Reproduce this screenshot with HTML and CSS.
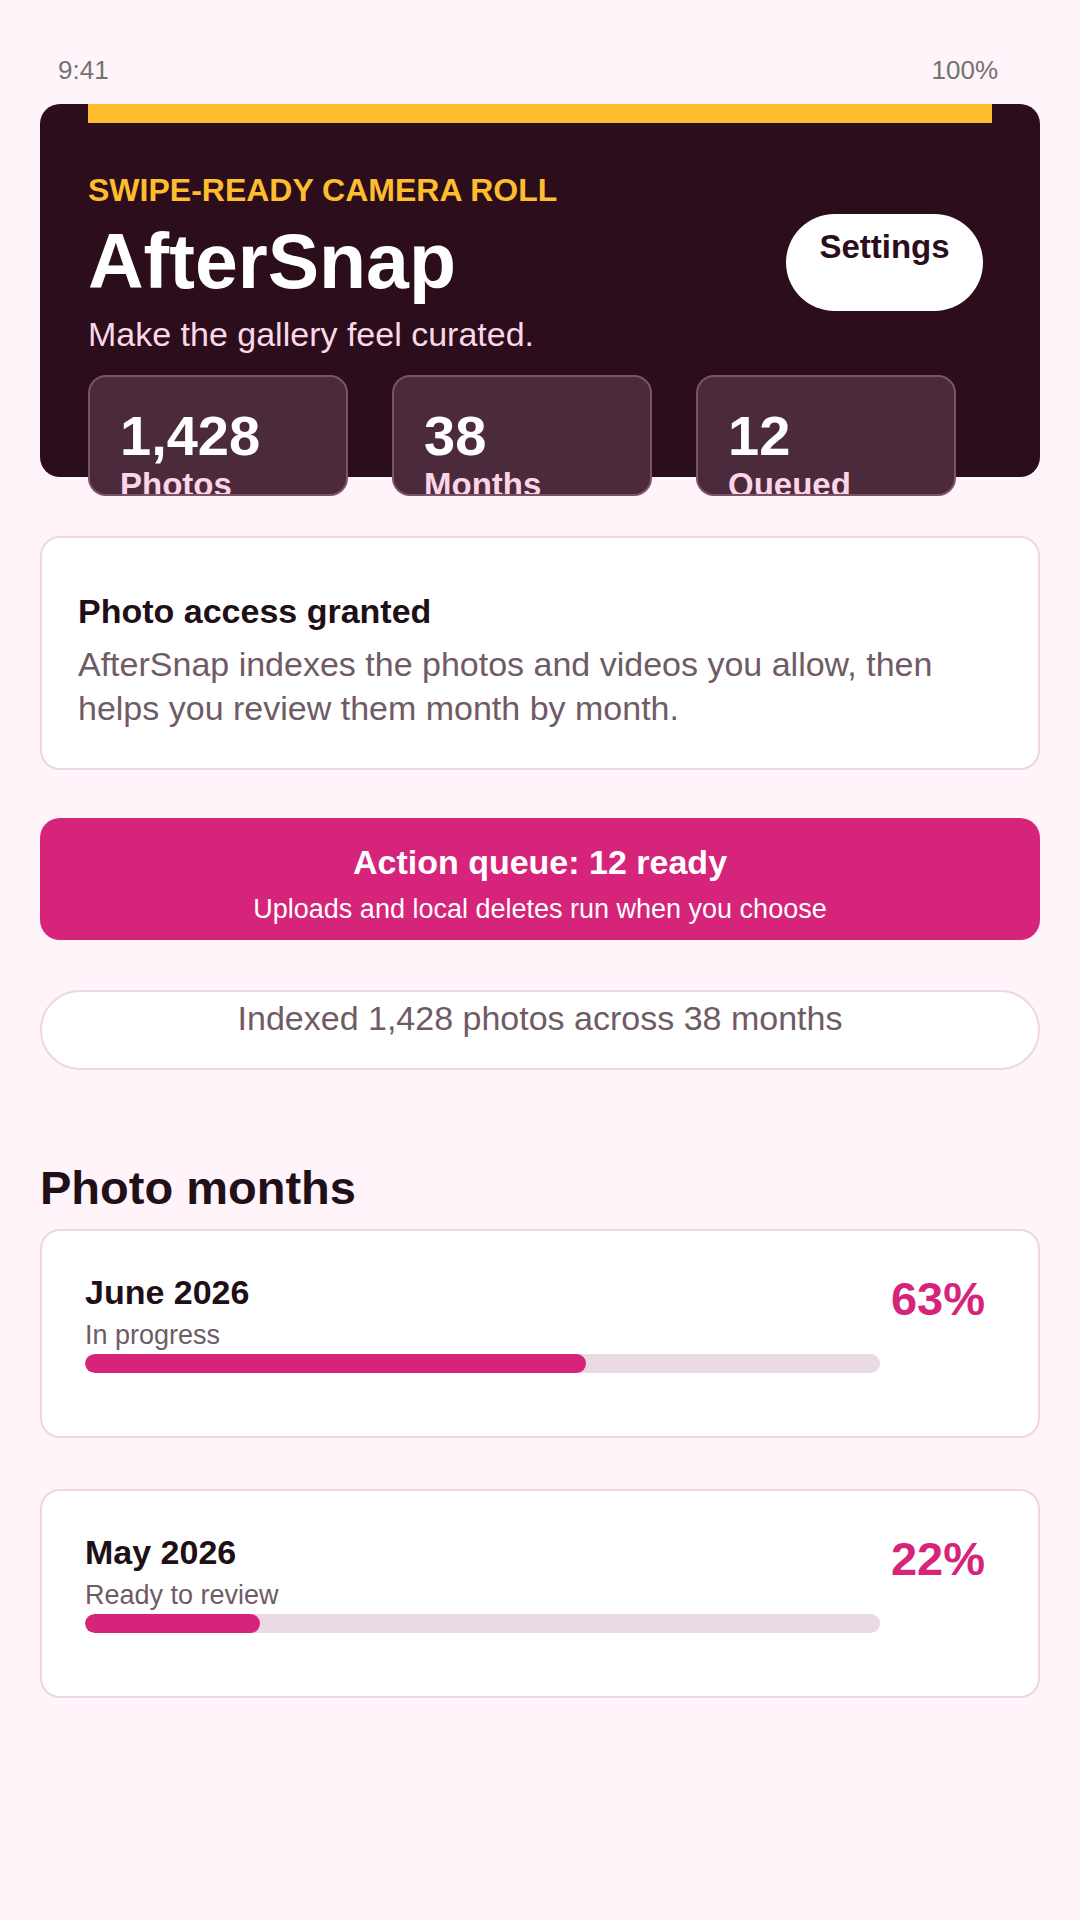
FILE: index.html
```html
<!DOCTYPE html>
<html lang="en">
<head>
<meta charset="utf-8">
<title>AfterSnap</title>
<link rel="stylesheet" href="styles.css">
</head>
<body>
<div class="screen">
  <div class="status">
    <span>9:41</span>
    <span>100%</span>
  </div>

  <section class="hero">
    <div class="hero-bar"></div>
    <div class="hero-head">
      <div class="hero-text">
        <p class="eyebrow">SWIPE-READY CAMERA ROLL</p>
        <h1 class="title">AfterSnap</h1>
        <p class="tagline">Make the gallery feel curated.</p>
      </div>
      <button class="settings">Settings</button>
    </div>
    <div class="stats">
      <div class="stat"><div class="stat-num">1,428</div><div class="stat-label">Photos</div></div>
      <div class="stat"><div class="stat-num">38</div><div class="stat-label">Months</div></div>
      <div class="stat"><div class="stat-num">12</div><div class="stat-label">Queued</div></div>
    </div>
  </section>

  <section class="card access">
    <h3 class="access-title">Photo access granted</h3>
    <p class="access-body">AfterSnap indexes the photos and videos you allow, then helps you review them month by month.</p>
  </section>

  <button class="queue">
    <span class="queue-title">Action queue: 12 ready</span>
    <span class="queue-sub">Uploads and local deletes run when you choose</span>
  </button>

  <div class="indexed">Indexed 1,428 photos across 38 months</div>

  <h2 class="section-title">Photo months</h2>

  <div class="months">
    <div class="card month">
      <div class="month-info">
        <div class="month-name">June 2026</div>
        <div class="month-status">In progress</div>
        <div class="track"><div class="fill" style="width:63%"></div></div>
      </div>
      <div class="month-pct">63%</div>
    </div>
    <div class="card month">
      <div class="month-info">
        <div class="month-name">May 2026</div>
        <div class="month-status">Ready to review</div>
        <div class="track"><div class="fill" style="width:22%"></div></div>
      </div>
      <div class="month-pct">22%</div>
    </div>
  </div>
</div>
</body>
</html>
```

FILE: styles.css
```css
* { box-sizing: border-box; }

html, body {
  margin: 0;
  padding: 0;
  background: #fff4fa;
}

body {
  font-family: "Liberation Sans", Arial, sans-serif;
  color: #24111b;
}

p, h1, h2, h3 { margin: 0; }

.screen {
  width: 1080px;
  min-height: 1920px;
  padding: 55px 40px 0;
}

.status {
  display: flex;
  justify-content: space-between;
  padding: 0 42px 0 18px;
  font-size: 26px;
  line-height: 30px;
  color: #737373;
}

.hero {
  margin-top: 19px;
  height: 373px;
  background: #2b0d1b;
  border-radius: 20px;
  padding: 0 48px;
}

.hero-bar {
  height: 19px;
  background: #fdbd2f;
}

.hero-head {
  margin-top: 49px;
  display: flex;
  align-items: center;
  justify-content: space-between;
}

.eyebrow {
  font-size: 32px;
  line-height: 36px;
  font-weight: 700;
  color: #fdbd2f;
}

.title {
  margin-top: 10px;
  font-size: 77px;
  line-height: 86px;
  font-weight: 700;
  color: #ffffff;
}

.tagline {
  margin-top: 11px;
  font-size: 34px;
  line-height: 38px;
  color: #fbd7e8;
}

.settings {
  margin-right: 9px;
  width: 197px;
  height: 97px;
  padding: 14px 0 0;
  border: none;
  border-radius: 49px;
  background: #ffffff;
  color: #2b0d1b;
  font-family: inherit;
  font-size: 33px;
  line-height: 38px;
  font-weight: 700;
  text-align: center;
  align-self: center;
  display: flex;
  justify-content: center;
  align-items: flex-start;
}

.stats {
  margin-top: 22px;
  display: flex;
  gap: 44px;
}

.stat {
  width: 260px;
  height: 121px;
  padding: 30px 30px 0;
  background: #4b2b3b;
  border: 2px solid #7b526a;
  border-radius: 18px;
  overflow: hidden;
}

.stat-num {
  font-size: 56px;
  line-height: 58px;
  font-weight: 700;
  color: #ffffff;
}

.stat-label {
  margin-top: 2px;
  font-size: 33px;
  line-height: 36px;
  font-weight: 700;
  color: #fcd5e6;
}

.card {
  background: #ffffff;
  border: 2px solid #efd6e3;
  border-radius: 20px;
}

.access {
  margin-top: 59px;
  padding: 54px 36px 38px;
}

.access-title {
  font-size: 34px;
  line-height: 38px;
  font-weight: 700;
  color: #1f0f17;
}

.access-body {
  margin-top: 12px;
  font-size: 34px;
  line-height: 44px;
  color: #6f5b66;
}

.queue {
  margin-top: 48px;
  width: 100%;
  height: 122px;
  padding: 25px 20px 0;
  border: none;
  border-radius: 20px;
  background: #d6247a;
  color: #ffffff;
  font-family: inherit;
  display: flex;
  flex-direction: column;
  align-items: center;
  justify-content: flex-start;
}

.queue-title {
  font-size: 34px;
  line-height: 38px;
  font-weight: 700;
}

.queue-sub {
  margin-top: 13px;
  font-size: 27px;
  line-height: 30px;
}

.indexed {
  margin-top: 50px;
  height: 80px;
  padding-top: 7px;
  background: #ffffff;
  border: 2px solid #efd6e3;
  border-radius: 40px;
  text-align: center;
  font-size: 34px;
  line-height: 38px;
  color: #6f5b66;
}

.section-title {
  margin-top: 92px;
  font-size: 47px;
  line-height: 52px;
  font-weight: 700;
  color: #221019;
}

.months {
  margin-top: 15px;
  display: flex;
  flex-direction: column;
  gap: 51px;
}

.month {
  display: flex;
  align-items: flex-start;
  gap: 11px;
  padding: 42px 53px 42px 43px;
}

.month-info {
  flex: 1;
}

.month-name {
  font-size: 34px;
  line-height: 38px;
  font-weight: 700;
  color: #1f0f17;
}

.month-status {
  margin-top: 9px;
  font-size: 27px;
  line-height: 30px;
  color: #6f5b66;
}

.track {
  margin-top: 4px;
  margin-bottom: 21px;
  height: 19px;
  border-radius: 10px;
  background: #eadae3;
  overflow: hidden;
}

.fill {
  height: 100%;
  border-radius: 10px;
  background: #d6247a;
}

.month-pct {
  font-size: 47px;
  line-height: 52px;
  font-weight: 700;
  color: #d6247a;
}
```
